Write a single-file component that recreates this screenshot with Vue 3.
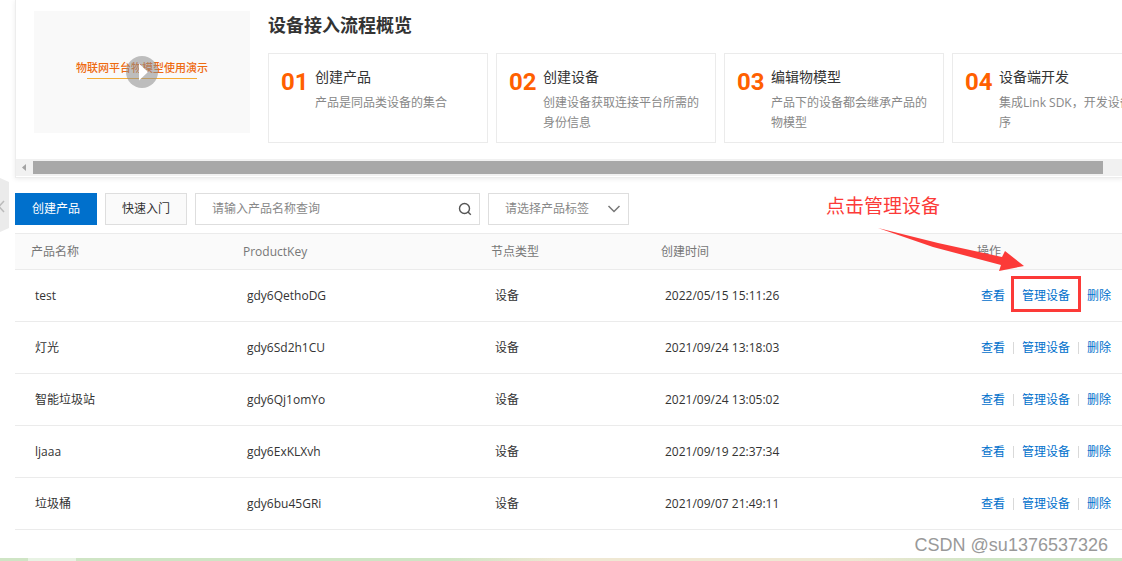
<script setup>
import { ref } from 'vue'

const keyword = ref('')
const tag = ref('')
const steps = [
  { no: '01', title: '创建产品', text: '产品是同品类设备的集合' },
  { no: '02', title: '创建设备', text: '创建设备获取连接平台所需的身份信息' },
  { no: '03', title: '编辑物模型', text: '产品下的设备都会继承产品的物模型' },
  { no: '04', title: '设备端开发', text: '集成Link SDK，开发设备端程序' },
]
const products = [
  { name: 'test', key: 'gdy6QethoDG', time: '2022/05/15 15:11:26', marked: true },
  { name: '灯光', key: 'gdy6Sd2h1CU', time: '2021/09/24 13:18:03' },
  { name: '智能垃圾站', key: 'gdy6Qj1omYo', time: '2021/09/24 13:05:02' },
  { name: 'ljaaa', key: 'gdy6ExKLXvh', time: '2021/09/19 22:37:34' },
  { name: '垃圾桶', key: 'gdy6bu45GRi', time: '2021/09/07 21:49:11' },
]
</script>

<template>
  <div class="page">
    <button class="collapse" aria-label="收起侧栏">
      <svg width="9" height="54" viewBox="0 0 9 54">
        <path d="M0 0L9 4V50L0 54Z" fill="#ebebeb" />
        <path d="M4 23L-1 28.500L4 34" fill="none" stroke="#bbb" stroke-width="1.500" />
      </svg>
    </button>

    <main class="main">
      <section class="overview">
        <div class="overview-body">
          <button class="video" aria-label="播放视频">
            <span class="video-title">物联网平台物模型使用演示</span>
            <svg class="play" width="32" height="32" viewBox="0 0 32 32">
              <circle cx="16" cy="16" r="16" fill="#8c8c8c" fill-opacity=".55" />
              <path d="M13 7.500V24.500L22 16Z" fill="#fff" />
            </svg>
          </button>
          <div class="guide">
            <h2>设备接入流程概览</h2>
            <ol class="steps">
              <li v-for="s in steps" :key="s.no" class="step">
                <span class="step-no">{{ s.no }}</span>
                <div>
                  <h3>{{ s.title }}</h3>
                  <p>{{ s.text }}</p>
                </div>
              </li>
            </ol>
          </div>
        </div>
        <div class="scroll">
          <svg width="17" height="17" viewBox="0 0 17 17"><path d="M10 5V12L6 8.500Z" fill="#a3a3a3" /></svg>
          <div class="thumb"></div>
        </div>
      </section>

      <div class="toolbar">
        <button class="btn primary">创建产品</button>
        <button class="btn">快速入门</button>
        <div class="field search">
          <input v-model="keyword" type="text" placeholder="请输入产品名称查询" aria-label="产品名称" />
          <svg width="14" height="14" viewBox="0 0 14 14" fill="none" stroke="#555" stroke-width="1.400">
            <circle cx="6.500" cy="6.500" r="5" /><path d="M10 10L12.800 12.800" />
          </svg>
        </div>
        <div class="field tags">
          <select v-model="tag" aria-label="产品标签">
            <option value="">请选择产品标签</option>
          </select>
          <svg width="14" height="8" viewBox="0 0 14 8" fill="none" stroke="#777" stroke-width="1.500">
            <path d="M1.500 1L7 6.500L12.500 1" />
          </svg>
        </div>
      </div>

      <table>
        <colgroup><col class="c1" /><col class="c2" /><col class="c3" /><col /><col class="c5" /></colgroup>
        <thead>
          <tr><th>产品名称</th><th>ProductKey</th><th>节点类型</th><th>创建时间</th><th>操作</th></tr>
        </thead>
        <tbody>
          <tr v-for="p in products" :key="p.key">
            <td>{{ p.name }}</td>
            <td>{{ p.key }}</td>
            <td>设备</td>
            <td>{{ p.time }}</td>
            <td>
              <div class="actions">
                <a href="#">查看</a><i></i>
                <a href="#" :class="{ marked: p.marked }">管理设备</a><i></i>
                <a href="#">删除</a>
              </div>
            </td>
          </tr>
        </tbody>
      </table>
    </main>

    <div class="note">
      <span>点击管理设备</span>
      <svg width="146" height="46" viewBox="0 0 146 46">
        <path d="M0 0L60 15L124 29L127 23L146 38L121 43L123 37L55 19Z" fill="#fc3a38" />
      </svg>
    </div>
    <div class="watermark">CSDN @su1376537326</div>
    <footer class="strip"><span></span></footer>
  </div>
</template>

<style>
body { margin: 0; overflow: hidden; background: #fff; }
</style>

<style scoped>
.page {
  position: relative;
  box-sizing: border-box;
  min-height: 100vh;
  display: flex;
  flex-direction: column;
  overflow: hidden;
  font: 12px/20px "Open Sans", "Noto Sans CJK SC", sans-serif;
  color: #333;
}
button, input, select { font: inherit; color: inherit; margin: 0; }
.collapse {
  position: absolute;
  left: 0;
  top: 178px;
  padding: 0;
  border: 0;
  background: none;
}
.collapse svg { display: block; }
.main { flex: 1; padding-left: 15px; }
.overview {
  margin-right: -1px;
  border: 1px solid #ededed;
  border-top: 0;
  box-shadow: 0 1px 5px rgba(0, 0, 0, .08);
  padding-bottom: 1px;
}
.overview-body {
  display: flex;
  gap: 18px;
  height: 148px;
  padding: 11px 0 0 18px;
  box-sizing: border-box;
  margin-bottom: 11px;
}
.video {
  position: relative;
  flex: none;
  width: 216px;
  height: 122px;
  padding: 0;
  border: 0;
  background: #f9f9f9;
  text-align: center;
}
.video-title {
  display: block;
  font-size: 11px;
  font-weight: 500;
  line-height: 20px;
  color: #ee6a10;
  margin-top: -8px;
}
.video-title::after {
  content: "";
  display: block;
  width: 110px;
  height: 1px;
  margin: 0 auto;
  background: #f5ad35;
}
.play { position: absolute; left: 92px; top: 45px; }
.guide { flex: none; }
h2 { margin: 0 0 14px; font-size: 18px; line-height: 28px; font-weight: 700; }
.steps { display: flex; gap: 8px; margin: 0; padding: 0; list-style: none; }
.step {
  display: flex;
  box-sizing: border-box;
  width: 220px;
  height: 90px;
  border: 1px solid #ebebeb;
  padding: 12px 12px 0;
}
.step-no {
  flex: none;
  width: 34px;
  font: 700 24px/32px Roboto, sans-serif;
  color: #ff6000;
}
h3 { margin: 0 0 5px; font-size: 14px; line-height: 22px; font-weight: 400; }
.step p { margin: 0; color: #888; }
.scroll { display: flex; background: #f1f1f1; height: 17px; }
.thumb { flex: 1; margin: 2px 19px 2px 0; background: #a8a8a8; }
.toolbar { display: flex; gap: 8px; margin: 15px 0 8px; }
.btn {
  box-sizing: border-box;
  width: 82px;
  height: 32px;
  padding: 0;
  border: 1px solid #dedede;
  background: #fafafa;
}
.primary { border-color: #0070cc; background: #0070cc; color: #fff; }
.field {
  display: flex;
  align-items: center;
  box-sizing: border-box;
  height: 32px;
  border: 1px solid #dedede;
  padding: 0 7px 0 16px;
  color: #888;
}
.search { width: 285px; }
.tags { width: 141px; }
.field input, .field select {
  flex: 1;
  min-width: 0;
  padding: 0;
  border: 0;
  outline: 0;
  background: none;
  appearance: none;
}
.field input::placeholder { color: #888; }
.field svg { flex: none; }
table { width: 100%; table-layout: fixed; border-collapse: separate; border-spacing: 0; }
.c1 { width: 212px; }
.c2 { width: 248px; }
.c3 { width: 170px; }
.c5 { width: 161px; }
th {
  height: 35px;
  padding: 0 16px;
  border: solid #ebebeb;
  border-width: 1px 0;
  background: #fafafa;
  color: #777;
  font-weight: 400;
  text-align: left;
}
td { height: 51px; padding: 0 0 0 20px; border-bottom: 1px solid #ebebeb; white-space: nowrap; }
.actions { display: flex; align-items: center; }
.actions a { position: relative; color: #0070cc; text-decoration: none; }
.actions i { width: 1px; height: 12px; margin: 0 8px; background: #d9d9d9; }
.marked::after {
  content: "";
  position: absolute;
  inset: -10px -11px -6px;
  border: 3px solid #fc3a38;
}
.note { position: absolute; right: 98px; top: 192px; color: #fc3a38; }
.note span { display: block; font-size: 19px; line-height: 28px; margin-right: 82px; }
.note svg { display: block; margin: 8px 0 0 52px; }
.watermark {
  position: absolute;
  right: 14px;
  bottom: 4px;
  font: 18px/24px "Liberation Sans", sans-serif;
  color: #999;
}
.strip { height: 3px; background: linear-gradient(90deg, #cfe5c5 0 40%, #efe8d3 50% 76%, #cfe5c5 88%); }
.strip span { display: block; width: 48px; height: 3px; margin-left: 28px; background: #e8f3e4; }
</style>
